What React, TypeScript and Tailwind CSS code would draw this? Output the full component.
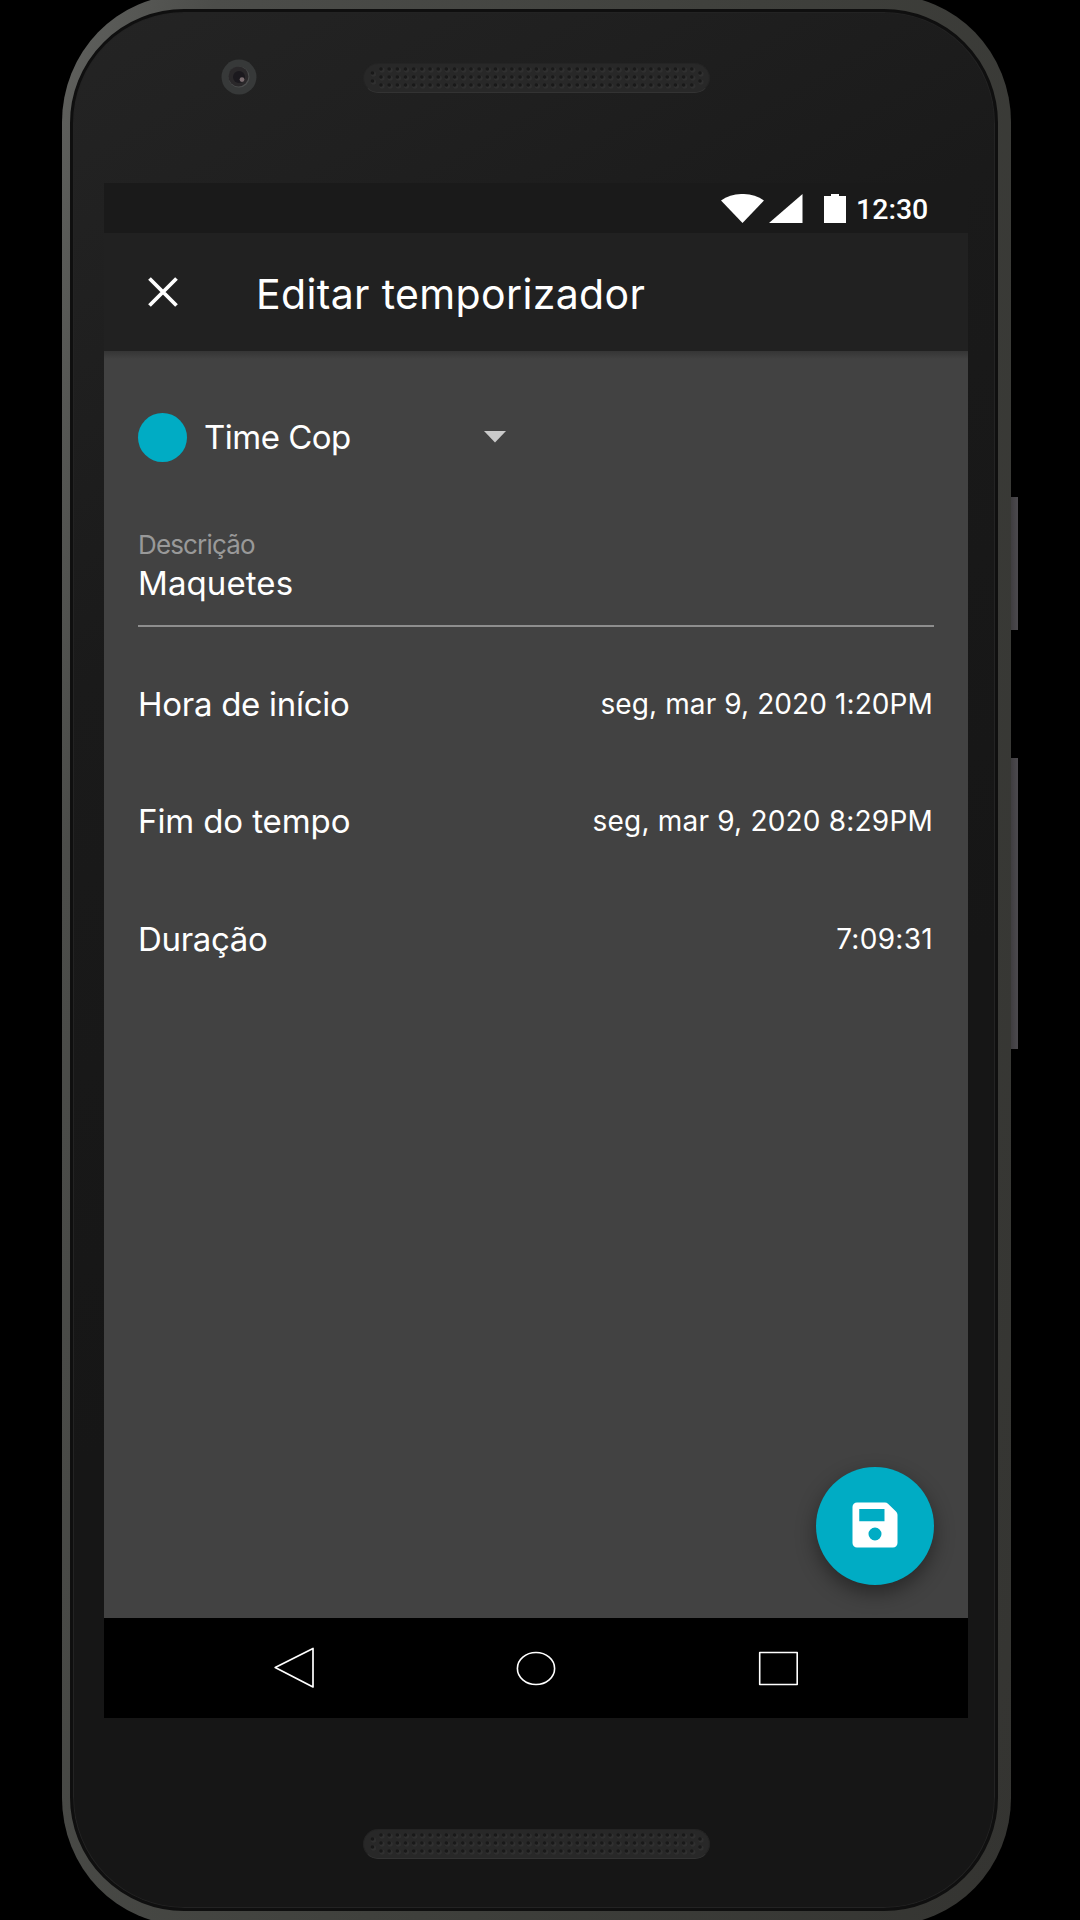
const dots: [number, number][] = [];
for (let i = 0; i < 39; i++) for (let r = 0; r < 3; r++) dots.push([18 + i * 8.18, 6 + r * 8]);
[9.5, 337].forEach((x) => dots.push([x, 10], [x, 18]));

function Speaker() {
  return (
    <div className="h-[30px] w-[347px] rounded-full border border-[#242424] border-b-[#333] bg-[#282828]">
      <svg className="-ml-px -mt-px" width="347" height="30">
        {dots.map(([x, y], i) => (
          <g key={i}>
            <circle cx={x + 1} cy={y + 1} r="2.6" fill="#303030" />
            <circle cx={x} cy={y} r="1.8" fill="#191919" />
          </g>
        ))}
      </svg>
    </div>
  );
}

function Camera() {
  return (
    <svg width="36" height="36" viewBox="-18 -18 36 36">
      <circle r="17.5" fill="#373939" />
      <circle r="10.5" fill="#4c4e4e" />
      <circle r="10" cx="-.6" cy="-.6" fill="#2a282a" />
      <circle r="6" fill="#1b191e" />
      <circle r="2.4" cx="3" cy="2.6" fill="#7b6d70" />
    </svg>
  );
}

function StatusBar() {
  return (
    <div className="flex h-[50px] items-center bg-[#1a1a1a] pl-[617px] pt-px">
      <svg width="43" height="30" viewBox="0 0 43 30" fill="#fff">
        <path d="M0 6.500C12-2.200 31-2.200 43 6.500L21.500 29z" />
      </svg>
      <svg className="ml-[5px]" width="34" height="30" viewBox="0 0 34 30" fill="#fff">
        <path d="M33.500 0V29H0z" />
      </svg>
      <svg className="ml-[21px]" width="22" height="30" viewBox="0 0 22 30" fill="#fff">
        <path d="M0 2H7V0h8v2h7v27H0z" />
      </svg>
      <span className="ml-[10px] pt-[3px] font-['Roboto'] text-[28.500px] font-medium leading-none text-white">12:30</span>
    </div>
  );
}

function AppBar() {
  return (
    <div className="flex h-[118px] items-center bg-[#212121] pl-[44px]">
      <svg width="30" height="30" viewBox="0 0 30 30" stroke="#fff" strokeWidth="3.800">
        <path d="M1.500 1.500l27 27M28.500 1.500l-27 27" />
      </svg>
      <h1 className="ml-[78px] whitespace-nowrap pt-1 text-[41px] leading-[48px] tracking-[0.35px]">Editar temporizador</h1>
    </div>
  );
}

function Row({ label, value, labelClass, valueClass }: { label: string; value: string; labelClass: string; valueClass: string }) {
  return (
    <div className="flex h-[117.5px] items-center justify-between">
      <span className={`text-[33px] leading-10 ${labelClass}`}>{label}</span>
      <span className={`pr-px text-[28px] leading-10 ${valueClass}`}>{value}</span>
    </div>
  );
}

function Content() {
  return (
    <div className="relative flex h-[1267px] flex-col bg-[#424242] bg-[linear-gradient(#353535,#424242_8px)] px-[34px] pt-[61px]">
      <div className="flex h-[50px] items-center">
        <span className="size-[49px] rounded-full bg-[#00acc4]" />
        <span className="ml-[17px] w-[280px] text-[33px] leading-10 tracking-[-0.5px]">Time Cop</span>
        <svg width="22" height="12" viewBox="0 0 22 12" fill="#cacaca">
          <path d="M0 0h22L11 11.500z" />
        </svg>
      </div>
      <div className="mt-[68px] text-[26px] leading-[30px] tracking-[-0.85px] text-[#999]">Descrição</div>
      <div className="mt-[3px] border-b-2 border-[#8e8e8e] pb-[22px] text-[33px] leading-10 tracking-[0.1px]">Maquetes</div>
      <div className="mt-[18px]">
        <Row label="Hora de início" value="seg, mar 9, 2020 1:20PM" labelClass="tracking-[-0.28px]" valueClass="tracking-[0.1px]" />
        <Row label="Fim do tempo" value="seg, mar 9, 2020 8:29PM" labelClass="tracking-[-0.1px]" valueClass="tracking-[0.2px]" />
        <Row label="Duração" value="7:09:31" labelClass="tracking-[-0.35px]" valueClass="tracking-[0.3px]" />
      </div>
      <button className="absolute bottom-[33px] right-[34px] flex size-[118px] items-center justify-center rounded-full bg-[#00acc4] shadow-[0_8px_20px_rgba(0,0,0,0.4)]">
        <svg className="-mt-0.5" width="60" height="60" viewBox="0 0 24 24" fill="#fff" fillRule="evenodd">
          <path d="M4.800 3H16a2 2 0 0 1 1.200.5l3.200 3.100A2 2 0 0 1 21 7.900V19.200A1.800 1.800 0 0 1 19.200 21H4.800A1.800 1.800 0 0 1 3 19.200V4.800A1.800 1.800 0 0 1 4.800 3zM5.700 5.600v4.900h10.100V5.600zM12 13a2.600 2.600 0 1 0 0 5.200 2.600 2.600 0 0 0 0-5.200z" />
        </svg>
      </button>
    </div>
  );
}

function NavBar() {
  return (
    <div className="flex h-[100px] items-center bg-black pl-[170px]">
      <svg width="40" height="42" viewBox="0 0 40 42" fill="none" stroke="#fff" strokeWidth="1.700" strokeLinejoin="round">
        <path d="M1.200 20.500L39 1.500v38.500z" />
      </svg>
      <svg className="ml-[202px]" width="40" height="36" viewBox="0 0 40 36" fill="none" stroke="#fff" strokeWidth="1.600">
        <ellipse cx="20" cy="18.500" rx="18.600" ry="16" />
      </svg>
      <svg className="ml-[202px]" width="41" height="36" viewBox="0 0 41 36" fill="none" stroke="#fff" strokeWidth="1.600" strokeLinejoin="round">
        <rect x="1.700" y="2.500" width="37.500" height="32" />
      </svg>
    </div>
  );
}

export default function App() {
  return (
    <div className="h-[1920px] w-[1080px] overflow-hidden bg-black font-['Inter',sans-serif] text-white">
      <div className="relative -mt-[5px] ml-[62px] h-[1930px] w-[949px] rounded-[123px/127px] bg-[linear-gradient(100deg,#60615e_0%,#4c4d4a_12%,#40413d_50%,#343431_100%)] pb-[14px] pl-2 pr-[13px] pt-[14px]">
        <span className="absolute -right-[7px] top-[502px] h-[133px] w-[7px] bg-[linear-gradient(90deg,#3f3d40,#4c4a4e)]" />
        <span className="absolute -right-[7px] top-[763px] h-[291px] w-[7px] bg-[linear-gradient(90deg,#3f3d40,#4c4a4e)]" />
        <div className="h-[1902px] rounded-[114px] border-[3px] border-[#0f0f0f] bg-[linear-gradient(150deg,#242424_0%,#202020_12%,#1a1a1a_28%,#161616_60%)] pl-[31px] shadow-[inset_0_0_0_1px_#232323]">
          <div className="flex h-[171px] items-start pl-[117px] pt-[47px]">
            <Camera />
            <div className="ml-[106px] mt-1"><Speaker /></div>
          </div>
          <div className="w-[864px]">
            <StatusBar />
            <AppBar />
            <Content />
            <NavBar />
          </div>
          <div className="pl-[259px] pt-[111px]"><Speaker /></div>
        </div>
      </div>
    </div>
  );
}
